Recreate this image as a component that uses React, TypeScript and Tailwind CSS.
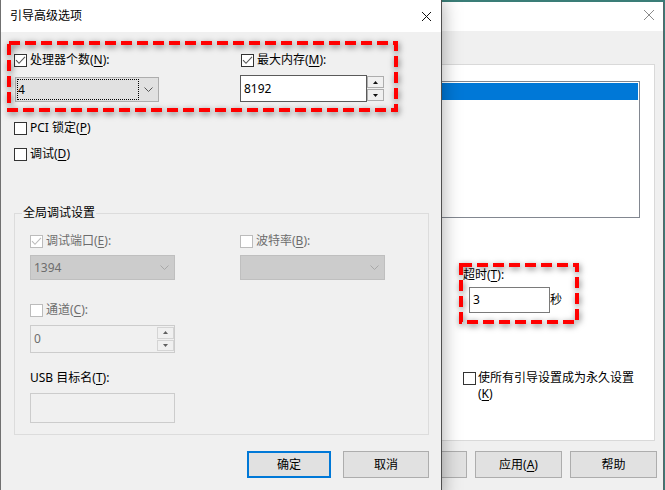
import React from "react";

const font = "font-['Noto_Sans','Noto_Sans_CJK_SC',sans-serif]";

function U({ children }: { children: React.ReactNode }) {
  return <span className="underline underline-offset-[2px]">{children}</span>;
}

function CheckBox({ checked = false, disabled = false }: { checked?: boolean; disabled?: boolean }) {
  return (
    <span
      className={`flex h-[13px] w-[13px] shrink-0 items-center justify-center border bg-white ${
        disabled ? "border-[#bcbcbc]" : "border-[#333333]"
      }`}
    >
      {checked && (
        <svg width="11" height="11" viewBox="0 0 11 11">
          <path d="M1 5.2 L4 8.3 L10 1.8" fill="none" stroke={disabled ? "#bcbcbc" : "#555555"} strokeWidth="1.1" />
        </svg>
      )}
    </span>
  );
}

function CheckRow({
  checked,
  disabled,
  children,
  className = "",
}: {
  checked?: boolean;
  disabled?: boolean;
  children: React.ReactNode;
  className?: string;
}) {
  return (
    <div
      className={`flex h-[16px] items-center gap-[3px] leading-[16px] ${
        disabled ? "text-[#6d6d6d]" : "text-black"
      } ${className}`}
    >
      <CheckBox checked={checked} disabled={disabled} />
      <span>{children}</span>
    </div>
  );
}

function Chevron({ color }: { color: string }) {
  return (
    <svg width="9" height="5" viewBox="0 0 9 5">
      <path d="M0.5 0.5 L4.5 4.5 L8.5 0.5" fill="none" stroke={color} strokeWidth="1" />
    </svg>
  );
}

function Arrow({ up, color }: { up?: boolean; color: string }) {
  return (
    <svg width="5" height="3" viewBox="0 0 5 3">
      <path d={up ? "M2.5 0 L5 3 L0 3 Z" : "M0 0 L5 0 L2.5 3 Z"} fill={color} />
    </svg>
  );
}

function Spin({ border, arrow }: { border: string; arrow: string }) {
  return (
    <div className="flex w-[17px] flex-col gap-[1px] py-[1px]">
      <div className={`flex flex-1 items-center justify-center border bg-[#f0f0f0] ${border}`}>
        <Arrow up color={arrow} />
      </div>
      <div className={`flex flex-1 items-center justify-center border bg-[#f0f0f0] ${border}`}>
        <Arrow color={arrow} />
      </div>
    </div>
  );
}

function CloseX({ color, size }: { color: string; size: number }) {
  return (
    <svg width={size} height={size} viewBox={`0 0 ${size} ${size}`}>
      <path d={`M0 0 L${size} ${size} M${size} 0 L0 ${size}`} stroke={color} strokeWidth="1" />
    </svg>
  );
}

function BackWindow() {
  return (
    <div className="absolute left-[150px] top-[2px] h-[500px] w-[514px] border-r border-[#56666a] bg-[#f0f0f0]">
      <div className="flex h-[29px] items-start justify-end bg-white pr-[9px] pt-[8px]">
        <CloseX color="#8a8a8a" size={10} />
      </div>
      <div className="px-[8px] pt-[33px]">
        <div className="h-[377px] border border-[#d9d9d9] bg-white">
          <div className="ml-[10px] mr-[14px] mt-[16px] h-[137px] border border-[#828790] p-[1px]">
            <div className="h-[17px] bg-[#0078d7]" />
          </div>
          <div className="ml-[304px] mt-[49px]">
            <div className="h-[16px] leading-[16px]">
              超时(<U>T</U>):
            </div>
            <div className="mt-[4px] flex items-center">
              <div className="ml-[6px] flex h-[26px] w-[81px] items-center border border-[#7a7a7a] bg-white pl-[3px]">
                3
              </div>
              <span>秒</span>
            </div>
          </div>
          <div className="ml-[304px] mt-[57px] flex items-start gap-[2px]">
            <span className="mt-[2px]">
              <CheckBox />
            </span>
            <span className="leading-[16px]">
              使所有引导设置成为永久设置
              <br />(<U>K</U>)
            </span>
          </div>
        </div>
        <div className="-mr-[2px] mt-[10px] flex justify-end gap-[8px]">
          <div className="flex h-[27px] w-[87px] items-center justify-center border border-[#adadad] bg-[#e1e1e1]">
            取消
          </div>
          <div className="flex h-[27px] w-[87px] items-center justify-center border border-[#adadad] bg-[#e1e1e1]">
            应用(<U>A</U>)
          </div>
          <div className="flex h-[27px] w-[87px] items-center justify-center border border-[#adadad] bg-[#e1e1e1]">
            帮助
          </div>
        </div>
      </div>
    </div>
  );
}

function FrontDialog() {
  return (
    <div className="absolute left-0 top-0 h-[500px] w-[442px] border-x border-l-[#707070] border-r-[#4f4f4f] bg-[#f0f0f0] shadow-[0_0_18px_rgba(0,0,0,0.35)]">
      <div className="flex h-[32px] items-center justify-between bg-white pl-[9px] pr-[10px]">
        <span>引导高级选项</span>
        <CloseX color="#111111" size={9} />
      </div>
      <div className="pl-[13px] pt-[20px]">
        <div className="flex">
          <div className="w-[226px]">
            <CheckRow checked>
              处理器个数(<U>N</U>):
            </CheckRow>
            <div className="ml-[1px] mt-[9px] flex h-[25px] w-[144px] items-center border border-[#adadad] bg-[#e1e1e1] px-[1px]">
              <div className="flex h-[21px] w-[122px] items-center border border-dotted border-black">4</div>
              <div className="flex flex-1 justify-center">
                <Chevron color="#555555" />
              </div>
            </div>
          </div>
          <div>
            <CheckRow checked className="ml-[1px]">
              最大内存(<U>M</U>):
            </CheckRow>
            <div className="mt-[7px] flex h-[27px]">
              <div className="flex w-[127px] items-center border border-[#5a5a5a] bg-white pl-[3px]">8192</div>
              <Spin border="border-[#adadad]" arrow="#111111" />
            </div>
          </div>
        </div>

        <CheckRow className="mt-[18px]">
          PCI 锁定(<U>P</U>)
        </CheckRow>
        <CheckRow className="mt-[10px]">
          调试(<U>D</U>)
        </CheckRow>

        <fieldset className="mt-[43px] w-[415px] border border-[#dcdcdc]">
          <legend className="ml-[7px] px-[1px] leading-[16px]">全局调试设置</legend>
          <div className="pb-[11px] pl-[15px] pt-[12px]">
            <div className="flex">
              <div className="w-[210px]">
                <CheckRow checked disabled>
                  调试端口(<U>E</U>):
                </CheckRow>
                <div className="mt-[6px] flex h-[25px] w-[145px] items-center justify-between border border-[#bfbfbf] bg-[#cccccc] pl-[3px] pr-[5px] text-[#6d6d6d]">
                  <span>1394</span>
                  <Chevron color="#a8a8a8" />
                </div>
              </div>
              <div>
                <CheckRow disabled>
                  波特率(<U>B</U>):
                </CheckRow>
                <div className="mt-[6px] flex h-[25px] w-[145px] items-center justify-end border border-[#bfbfbf] bg-[#cccccc] pr-[5px]">
                  <Chevron color="#a8a8a8" />
                </div>
              </div>
            </div>

            <CheckRow disabled className="mt-[22px]">
              通道(<U>C</U>):
            </CheckRow>
            <div className="mt-[7px] flex h-[28px] w-[145px] border border-[#cccccc] bg-[#f0f0f0]">
              <div className="flex flex-1 items-center pl-[3px] text-[#6d6d6d]">0</div>
              <Spin border="border-[#d4d4d4]" arrow="#606060" />
            </div>

            <div className="mt-[17px] h-[16px] leading-[16px]">
              USB 目标名(<U>T</U>):
            </div>
            <div className="mt-[7px] h-[30px] w-[145px] border border-[#cccccc] bg-[#f0f0f0]" />
          </div>
        </fieldset>

        <div className="mt-[16px] flex justify-end gap-[12px] pr-[12px]">
          <div className="flex h-[27px] w-[84px] items-center justify-center border-2 border-[#0078d7] bg-[#e1e1e1]">
            确定
          </div>
          <div className="flex h-[27px] w-[86px] items-center justify-center border border-[#adadad] bg-[#e1e1e1]">
            取消
          </div>
        </div>
      </div>
    </div>
  );
}

function Highlight({ left, top, width, height }: { left: number; top: number; width: number; height: number }) {
  return (
    <svg
      className="pointer-events-none absolute drop-shadow-[1px_2px_3px_rgba(0,0,0,0.55)]"
      style={{ left, top }}
      width={width}
      height={height}
      viewBox={`0 0 ${width} ${height}`}
    >
      <rect
        x="2"
        y="2"
        width={width - 4}
        height={height - 4}
        fill="none"
        stroke="#ff0000"
        strokeWidth="4"
        strokeDasharray="11 5"
      />
    </svg>
  );
}

export default function App() {
  return (
    <div className={`relative h-[490px] w-[665px] overflow-hidden bg-[#3a7d77] text-[12px] text-black ${font}`}>
      <BackWindow />
      <FrontDialog />
      <Highlight left={7} top={41} width={391} height={71} />
      <Highlight left={459} top={263} width={120} height={61} />
    </div>
  );
}
